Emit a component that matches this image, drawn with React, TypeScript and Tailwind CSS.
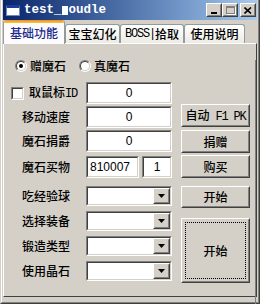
import React from "react"

const cjk = "font-['Noto_Sans_CJK_SC',sans-serif] font-medium"
const mono = "font-mono text-[12px] tracking-[-1.2px]"

type Box = { className?: string; children?: React.ReactNode }

const Raised = ({ className = "", children }: Box) => (
  <div className={`border border-t-white border-l-white border-r-[#404040] border-b-[#404040] bg-[#d4d0c8] ${className}`}>
    <div className="w-full h-full border border-t-[#d4d0c8] border-l-[#d4d0c8] border-r-[#808080] border-b-[#808080] flex items-center justify-center">
      {children}
    </div>
  </div>
)

const Sunken = ({ className = "", children }: Box) => (
  <div className={`border border-t-[#808080] border-l-[#808080] border-r-white border-b-white ${className}`}>
    <div className="w-full h-full border border-t-[#404040] border-l-[#404040] border-r-[#d4d0c8] border-b-[#d4d0c8] bg-white flex items-center">
      {children}
    </div>
  </div>
)

const Field = ({ value, className = "", align = "center" }: { value: string; className?: string; align?: "center" | "left" }) => (
  <Sunken className={`h-[22px] ${className}`}>
    <span className={`w-full font-['Liberation_Sans',sans-serif] font-normal text-[12px] text-black ${align === "center" ? "text-center" : "text-left pl-[2px]"}`}>
      {value}
    </span>
  </Sunken>
)

const Combo = () => (
  <Sunken className="w-[86px] h-[20px]">
    <div className="flex-1" />
    <Raised className="w-[17px] h-full">
      <svg width="7" height="4" viewBox="0 0 7 4">
        <path d="M0 0h7L3.5 4z" fill="black" />
      </svg>
    </Raised>
  </Sunken>
)

const Radio = ({ checked }: { checked?: boolean }) => (
  <div className="w-[12px] h-[12px] rounded-full border border-t-[#808080] border-l-[#808080] border-r-white border-b-white">
    <div className="w-full h-full rounded-full border border-t-[#404040] border-l-[#404040] border-r-[#d4d0c8] border-b-[#d4d0c8] bg-white flex items-center justify-center">
      {checked && <div className="w-[4px] h-[4px] rounded-full bg-black" />}
    </div>
  </div>
)

const Label = ({ children }: Box) => (
  <div className={`w-[75px] pl-[11px] ${cjk} text-[12px] text-black leading-none`}>{children}</div>
)

const Tab = ({ children, active, className = "" }: Box & { active?: boolean }) =>
  active ? (
    <div className={`relative z-10 -mb-px h-[24px] flex flex-col border-x border-[#919b9c] rounded-t-[3px] overflow-hidden bg-[#fcfcfe] ${className}`}>
      <div className="h-[3px] bg-linear-to-b from-[#e68b2c] to-[#ffc83c]" />
      <div className={`flex-1 flex items-center justify-center pb-[2px] ${cjk} text-[12px] text-[#1c2a8c]`}>{children}</div>
    </div>
  ) : (
    <div className={`h-[19px] flex items-center justify-center border border-b-0 border-[#919b9c] rounded-t-[3px] bg-linear-to-b from-white to-[#ecebe5] ${cjk} text-[12px] text-black ${className}`}>
      {children}
    </div>
  )

export default function App() {
  return (
    <div className="w-[260px] h-[304px] bg-[#d4d0c8] border-l border-l-[#d4d0c8] border-r border-r-[#404040] border-b border-b-[#404040]">
      <div className="w-full h-full flex flex-col border-l border-l-white border-r border-r-[#808080] border-b border-b-[#808080] px-px pb-px">
        {/* title bar */}
        <div className="h-[20px] flex items-center bg-linear-to-r from-[#0a246a] to-[#a6caf0] pr-[1px]">
          <div className="ml-[3px] w-[14px] h-[11px] bg-white border border-[#6d88c0] border-t-[3px] border-t-[#1a3c9c]" />
          <div className="ml-[4px] flex items-center font-mono font-bold text-[12.5px] leading-none text-white">
            <span>test_</span>
            <span className="inline-block w-[6px] h-[9px] bg-white mx-[0.5px]" />
            <span>oudle</span>
          </div>
          <div className="flex-1" />
          <Raised className="w-[16px] h-[14px]">
            <div className="w-[6px] h-[2px] bg-black mt-[6px] -ml-[1px]" />
          </Raised>
          <Raised className="w-[16px] h-[14px]">
            <div className="w-[9px] h-[8px] border border-[#808080] border-t-2 shadow-[1px_1px_0_white]" />
          </Raised>
          <Raised className="w-[16px] h-[14px] ml-[2px]">
            <svg width="8" height="7" viewBox="0 0 8 7">
              <path d="M0.5 0.5L7 6.5M7 0.5L0.5 6.5" stroke="black" strokeWidth="1.6" />
            </svg>
          </Raised>
        </div>

        {/* tabs */}
        <div className="h-[23px] flex items-end">
          <Tab active className="w-[62px]">基础功能</Tab>
          <Tab className="w-[55px]">宝宝幻化</Tab>
          <Tab className="w-[64px]">
            <span className={mono}>BOSS|</span>拾取
          </Tab>
          <Tab className="w-[61px]">使用说明</Tab>
        </div>

        {/* panel */}
        <div className="flex-1 mb-[4px] border-t border-l border-t-white border-l-white border-r border-b border-r-[#404040] border-b-[#404040]">
          <div className={`w-full h-full border-r border-b border-r-[#808080] border-b-[#808080] ${cjk} text-[12px] text-black`}>
            <div className="mt-[16px] ml-[11px] h-[12px] flex items-center">
              <Radio checked />
              <span className="ml-[3px] leading-none">赠魔石</span>
              <div className="ml-[13px]">
                <Radio />
              </div>
              <span className="ml-[3px] leading-none">真魔石</span>
            </div>

            <div className="mt-[10px] ml-[7px] flex">
              {/* left column */}
              <div className="w-[161px] flex flex-col">
                <div className="h-[22px] flex items-center">
                  <div className="w-[75px] flex items-center">
                    <Sunken className="w-[13px] h-[13px]" />
                    <span className="ml-[5px] leading-none">
                      取鼠标<span className={mono}>ID</span>
                    </span>
                  </div>
                  <Field value="0" className="w-[86px]" />
                </div>
                <div className="mt-[2px] h-[22px] flex items-center">
                  <Label>移动速度</Label>
                  <Field value="0" className="w-[86px]" />
                </div>
                <div className="mt-[2px] h-[22px] flex items-center">
                  <Label>魔石捐爵</Label>
                  <Field value="0" className="w-[86px]" />
                </div>
                <div className="mt-[4px] h-[22px] flex items-center">
                  <Label>魔石买物</Label>
                  <Field value="810007" align="left" className="w-[53px]" />
                  <Field value="1" className="w-[30px] ml-[3px]" />
                </div>
                <div className="mt-[8px] h-[20px] flex items-center">
                  <Label>吃经验球</Label>
                  <Combo />
                </div>
                <div className="mt-[5px] h-[20px] flex items-center">
                  <Label>选择装备</Label>
                  <Combo />
                </div>
                <div className="mt-[5px] h-[20px] flex items-center">
                  <Label>锻造类型</Label>
                  <Combo />
                </div>
                <div className="mt-[5px] h-[20px] flex items-center">
                  <Label>使用晶石</Label>
                  <Combo />
                </div>
              </div>

              {/* right column */}
              <div className="ml-[9px] w-[69px] flex flex-col">
                <Raised className="mt-[22px] h-[23px]">
                  <span className="leading-none">
                    自动<span className={mono}> F1 PK</span>
                  </span>
                </Raised>
                <Raised className="mt-[3px] h-[23px]">捐赠</Raised>
                <Raised className="mt-[2px] h-[23px]">购买</Raised>
                <Raised className="mt-[8px] h-[22px]">开始</Raised>
                <Raised className="mt-[10px] h-[65px]">
                  <div className="w-[61px] h-[57px] border border-dotted border-black flex items-center justify-center">
                    开始
                  </div>
                </Raised>
              </div>
            </div>
          </div>
        </div>
      </div>
    </div>
  )
}
